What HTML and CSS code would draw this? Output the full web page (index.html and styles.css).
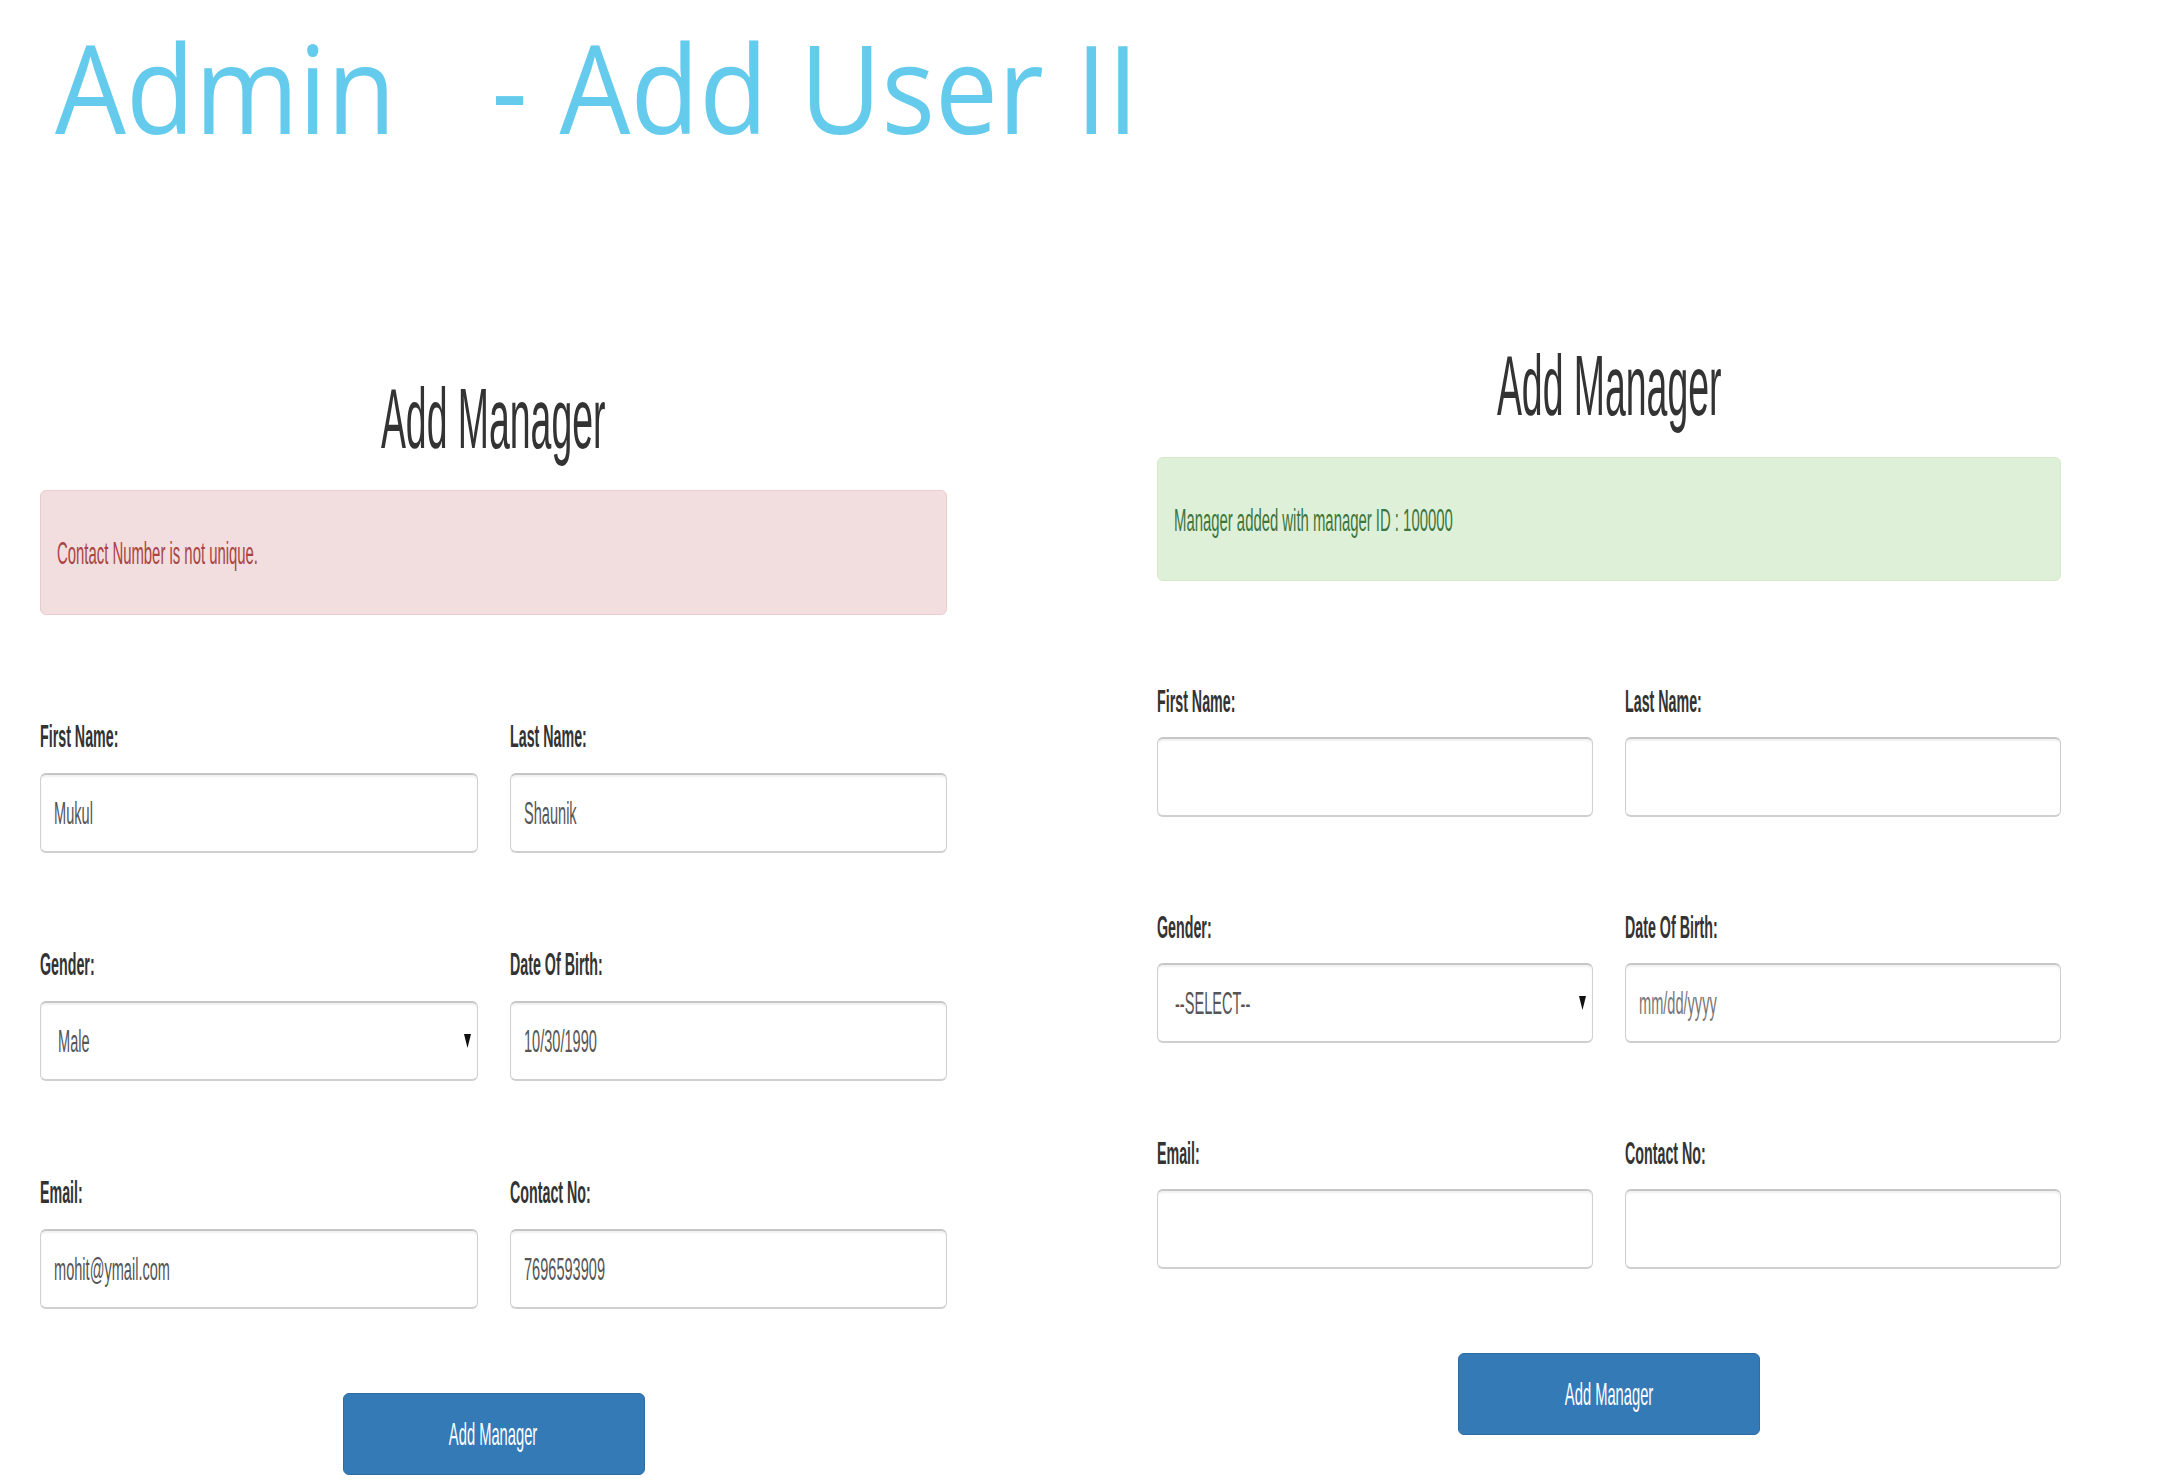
FILE: index.html
```html
<!DOCTYPE html>
<html lang="en">
<head>
<meta charset="utf-8">
<title>Admin - Add User II</title>
<link rel="stylesheet" href="styles.css">
</head>
<body>
<header class="slide-title">
  <h1><span class="title-text">Admin   - Add User II</span></h1>
</header>
<main class="panels">
  <section class="panel panel-error">
    <h2 class="panel-title"><span class="sq-title">Add Manager</span></h2>
    <div class="alert alert-danger"><span class="sq">Contact Number is not unique.</span></div>
    <div class="fields">
      <div class="field">
        <label class="field-label"><span class="sq">First Name:</span></label>
        <div class="control"><span class="sq">Mukul</span></div>
      </div>
      <div class="field">
        <label class="field-label"><span class="sq">Last Name:</span></label>
        <div class="control"><span class="sq">Shaunik</span></div>
      </div>
      <div class="field">
        <label class="field-label"><span class="sq">Gender:</span></label>
        <div class="control control-select"><span class="sq">Male</span><svg class="caret" viewBox="0 0 7 14" width="7" height="14"><polygon points="0,0 7,0 3.5,14" fill="#111"/></svg></div>
      </div>
      <div class="field">
        <label class="field-label"><span class="sq">Date Of Birth:</span></label>
        <div class="control"><span class="sq">10/30/1990</span></div>
      </div>
      <div class="field">
        <label class="field-label"><span class="sq">Email:</span></label>
        <div class="control"><span class="sq">mohit@ymail.com</span></div>
      </div>
      <div class="field">
        <label class="field-label"><span class="sq">Contact No:</span></label>
        <div class="control"><span class="sq">7696593909</span></div>
      </div>
    </div>
    <button class="btn-primary" type="button"><span class="sq">Add Manager</span></button>
  </section>

  <section class="panel panel-success">
    <h2 class="panel-title"><span class="sq-title">Add Manager</span></h2>
    <div class="alert alert-success"><span class="sq">Manager added with manager ID : 100000</span></div>
    <div class="fields">
      <div class="field">
        <label class="field-label"><span class="sq">First Name:</span></label>
        <div class="control"></div>
      </div>
      <div class="field">
        <label class="field-label"><span class="sq">Last Name:</span></label>
        <div class="control"></div>
      </div>
      <div class="field">
        <label class="field-label"><span class="sq">Gender:</span></label>
        <div class="control control-select"><span class="sq">--SELECT--</span><svg class="caret" viewBox="0 0 7 14" width="7" height="14"><polygon points="0,0 7,0 3.5,14" fill="#111"/></svg></div>
      </div>
      <div class="field">
        <label class="field-label"><span class="sq">Date Of Birth:</span></label>
        <div class="control control-placeholder"><span class="sq">mm/dd/yyyy</span></div>
      </div>
      <div class="field">
        <label class="field-label"><span class="sq">Email:</span></label>
        <div class="control"></div>
      </div>
      <div class="field">
        <label class="field-label"><span class="sq">Contact No:</span></label>
        <div class="control"></div>
      </div>
    </div>
    <button class="btn-primary" type="button"><span class="sq">Add Manager</span></button>
  </section>
</main>
</body>
</html>
```
FILE: styles.css
```css
html, body {
  margin: 0;
  padding: 0;
  background: #ffffff;
}

body {
  width: 2162px;
  height: 1484px;
  overflow: hidden;
  font-family: "Liberation Sans", Arial, sans-serif;
  color: #333333;
}

/* ---------- slide title ---------- */
.slide-title h1 {
  margin: 0;
  padding: 26px 0 0 55px;
  font-family: "Open Sans", "Noto Sans", sans-serif;
  font-weight: 400;
  font-size: 122px;
  line-height: 122px;
  color: #65cbec;
  white-space: pre;
}

.title-text {
  display: inline-block;
  transform: scaleX(0.92);
  transform-origin: left center;
  word-spacing: 3px;
}

/* ---------- panels ---------- */
.panels {
  display: flex;
  align-items: flex-start;
  gap: 210px;
  padding-left: 40px;
  margin-top: 195px;
}

.panel {
  width: 907px;
  --alert-h: 125px;
  --fields-top: 106px;
  --label-gap: 21px;
  --row-gap: 96px;
}

.panel-error {
  margin-top: 33px;
}

.panel-success {
  width: 904px;
  --alert-h: 124px;
  --fields-top: 105px;
  --label-gap: 20px;
  --row-gap: 95px;
}

/* text squeeze (reference is horizontally condensed) */
.sq {
  display: inline-block;
  transform: scaleX(0.46);
  transform-origin: left center;
  white-space: nowrap;
}

.panel-title {
  margin: 0;
  font-size: 85px;
  line-height: 85px;
  font-weight: 400;
  text-align: center;
  color: #333333;
}

.sq-title {
  display: inline-block;
  transform: scaleX(0.44);
  white-space: nowrap;
}

/* ---------- alerts ---------- */
.alert {
  box-sizing: border-box;
  height: var(--alert-h);
  margin-top: 29px;
  padding: 47px 16px 0;
  border: 1px solid transparent;
  border-radius: 6px;
  font-size: 31px;
  line-height: 31px;
}

.alert .sq {
  transform: scaleX(0.48);
}

.alert-danger {
  background: #f2dede;
  border-color: #ebccd1;
  color: #a94442;
}

.alert-success {
  background: #dff0d8;
  border-color: #d6e9c6;
  color: #3c763d;
}

/* ---------- fields ---------- */
.fields {
  display: grid;
  grid-template-columns: 1fr 1fr;
  column-gap: 32px;
  row-gap: var(--row-gap);
  margin-top: var(--fields-top);
}

.field-label {
  display: block;
  margin-bottom: var(--label-gap);
  font-size: 31px;
  line-height: 31px;
  font-weight: 700;
  color: #333333;
}

.control {
  box-sizing: border-box;
  height: 80px;
  padding: 0 13px;
  border: 1px solid #d0d0d0;
  border-top: 2px solid #c6c6c6;
  border-bottom: 2px solid #cfcfcf;
  border-radius: 6px;
  box-shadow: inset 0 2px 2px rgba(0, 0, 0, 0.06);
  background: #ffffff;
  font-size: 31px;
  line-height: 78px;
  color: #555555;
}

.control .sq {
  transform: scaleX(0.47);
}

.control-select {
  display: flex;
  align-items: center;
  justify-content: space-between;
  padding: 0 6px 0 17px;
}

.control-select .sq {
  line-height: 31px;
}

.caret {
  display: block;
  flex: none;
}

.control-placeholder {
  color: #777777;
}

/* ---------- button ---------- */
.btn-primary {
  display: block;
  box-sizing: border-box;
  width: 302px;
  height: 82px;
  margin: 84px auto 0;
  padding: 0;
  background: #337ab7;
  border: 1px solid #2e6da4;
  border-radius: 6px;
  color: #ffffff;
  font-family: "Liberation Sans", Arial, sans-serif;
  font-size: 32px;
  line-height: 80px;
  text-align: center;
}

.btn-primary .sq {
  transform-origin: center center;
}
```
